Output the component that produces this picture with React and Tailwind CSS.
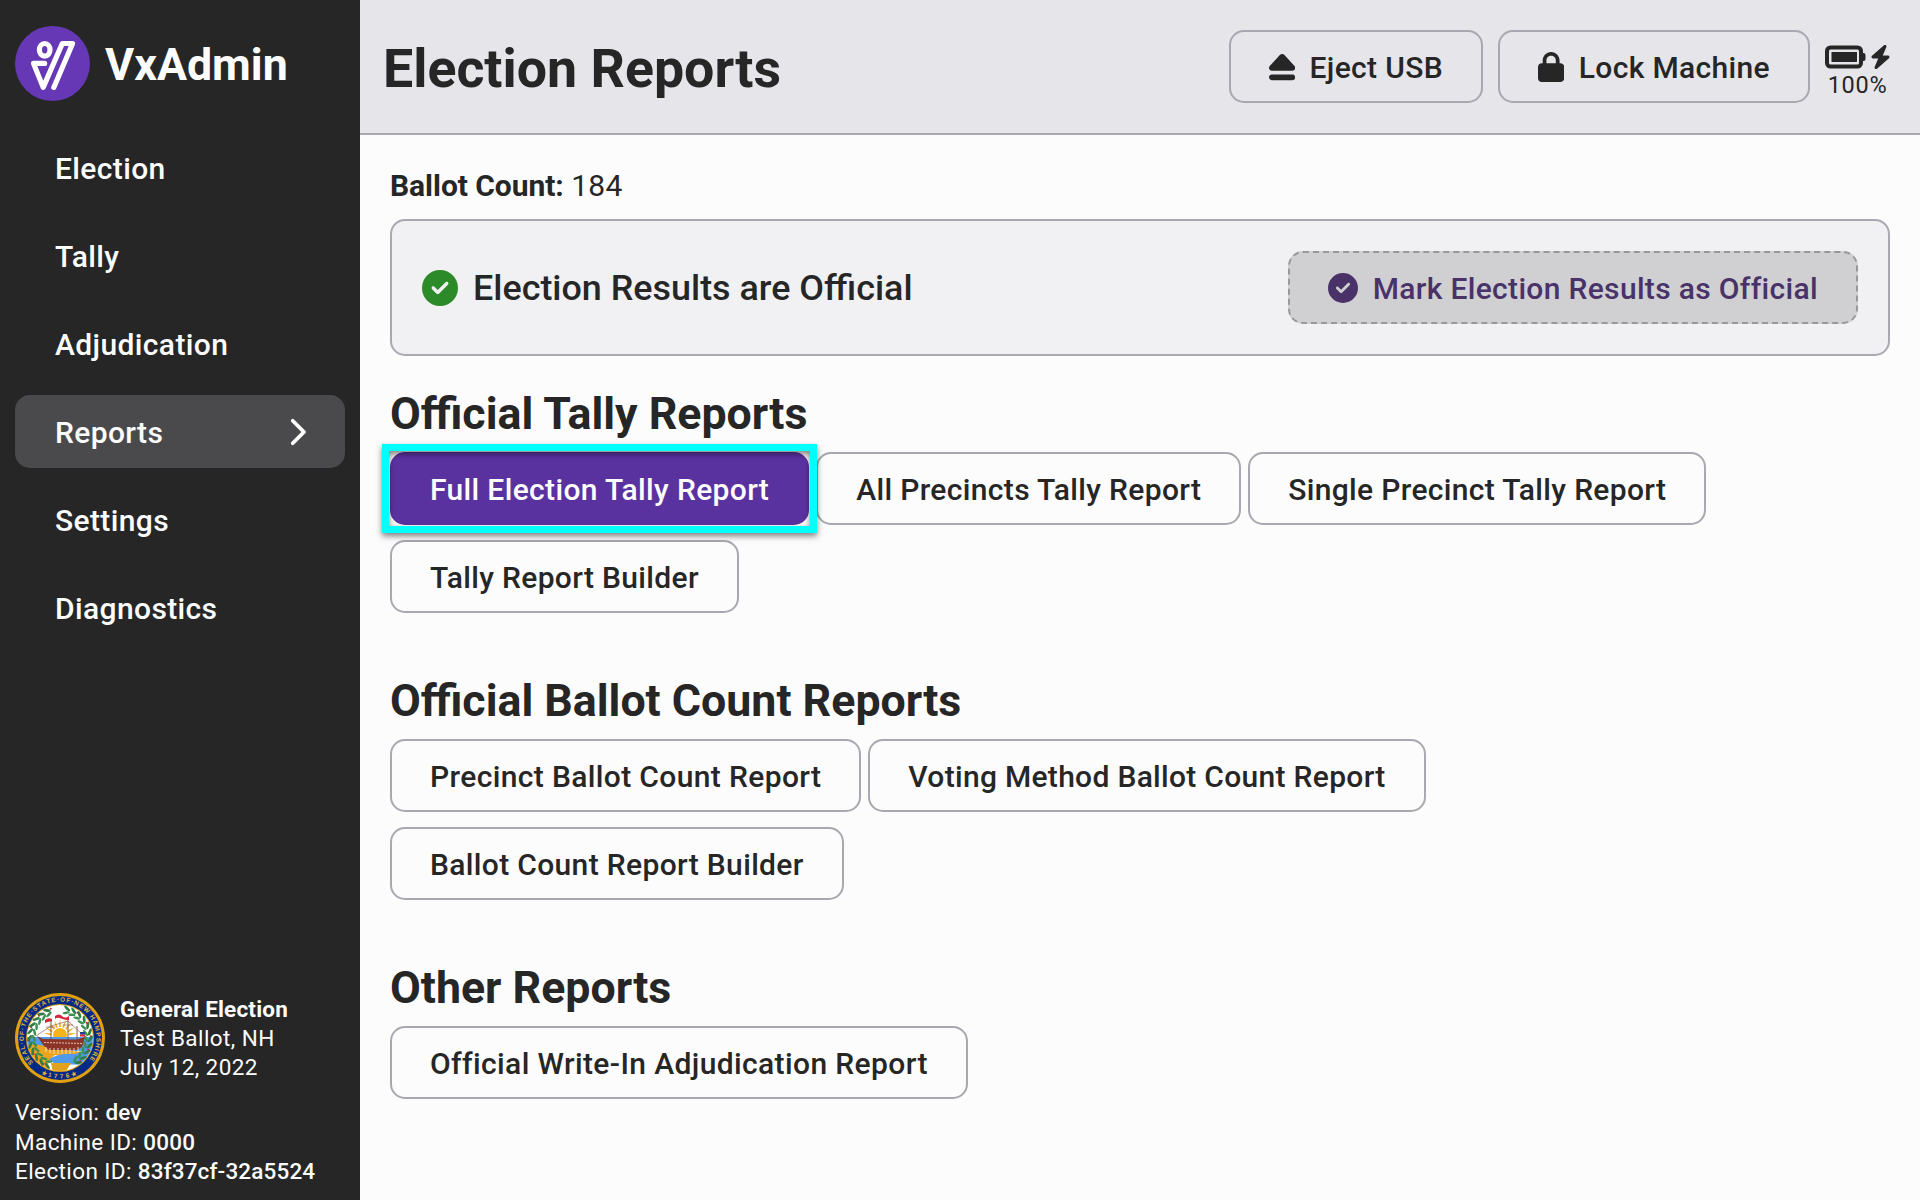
import { FaEject, FaLock, FaCircleCheck, FaChevronRight, FaBolt } from "react-icons/fa6";

const NAV_ITEMS = ["Election", "Tally", "Adjudication", "Reports", "Settings", "Diagnostics"];

function Logo() {
  return (
    <svg viewBox="0 0 75 75" className="size-[75px] shrink-0">
      <circle cx="37.5" cy="37.5" r="37.5" fill="#6638b6" />
      <g fill="none" stroke="#fff" strokeWidth="5.2" strokeLinecap="round" strokeLinejoin="round">
        <ellipse cx="29.7" cy="23.8" rx="5.3" ry="6.3" />
        <path d="M29.6 37.4H18.5L28.2 61.4L47.3 17.5H57.6L38.8 61.4" />
      </g>
    </svg>
  );
}

function Wreath() {
  const leaves = [];
  for (let a = -152; a <= 152; a += 13) {
    if (Math.abs(a) > 12) leaves.push(a);
  }
  return leaves.map((a, i) => (
    <g key={a} transform={`rotate(${a} 45 45)`}>
      <ellipse cx="43.2" cy="14.6" rx="3.8" ry="1.4" fill="#2f7d45" transform="rotate(28 43.2 14.6)" />
      <ellipse cx="43.6" cy="19" rx="3.6" ry="1.3" fill="#3c8f50" transform="rotate(-28 43.6 19)" />
      {i % 2 === 0 && <circle cx="47.4" cy="14.4" r="1" fill="#d0263a" />}
    </g>
  ));
}

function Seal() {
  const rays = [-80, -60, -40, -20, 0, 20, 40, 60, 80];
  return (
    <svg viewBox="0 0 90 90" className="size-[90px] shrink-0">
      <defs>
        <clipPath id="seal-center">
          <circle cx="45" cy="45" r="33" />
        </clipPath>
        <path id="seal-top" d="M18.2 69.6A36.4 36.4 0 1 1 71.8 69.6" />
        <path id="seal-bottom" d="M23 78.8A40.3 40.3 0 0 0 67 78.8" />
      </defs>
      <circle cx="45" cy="45" r="45" fill="#e0a010" />
      <circle cx="45" cy="45" r="42" fill="#022a86" />
      <circle cx="45" cy="45" r="34" fill="#e0a010" />
      <circle cx="45" cy="45" r="33" fill="#fff" />
      <g clipPath="url(#seal-center)">
        {rays.map((a) => (
          <path key={a} d="M43.9 34L45 26L46.1 34Z" fill="#f2b01e" transform={`rotate(${a} 45 43)`} />
        ))}
        <circle cx="45" cy="42" r="7" fill="#f6b41c" />
        <rect x="10" y="44" width="70" height="14" fill="#4f9bea" />
        <path d="M10 52Q24 50 36 55L68 59Q52 64 40 62Q30 68 34 80H10Z" fill="#eda41c" />
        <path d="M34 66Q44 60 60 61L74 56V72L40 71Z" fill="#4f9bea" />
        <path d="M36 70H56L50 80H38Z" fill="#e2a11c" />
      </g>
      <Wreath />
      <g stroke="#7d4a3c" strokeWidth="0.9" fill="none">
        <path d="M36 27V48M53 24V48M62 33V48" />
        <path d="M21 43L36 33L53 28L68 42M31 34H40M48 32H58" strokeWidth="0.6" />
      </g>
      <path d="M40 23Q44 20 47 23T54 23V27Q50 27 46 25.500T40 26Z" fill="#d4283c" />
      <path d="M30 27Q33 24 37 26V28.500Q33 28 30 30Z" fill="#d4283c" />
      <path d="M22 43L28 46L62 46.500L70 44L67 54L62 57H34L29 53Z" fill="#8c3426" />
      <path d="M29 49.5L67 50.5" stroke="#f3e6d8" strokeWidth="0.8" strokeDasharray="2 1" />
      <path d="M31 54V59M35 55V60M39 55V61M43 55V61M47 55V61M51 55V61M55 55V61M59 55V60M63 54V59" stroke="#efe7df" strokeWidth="0.9" />
      <rect x="65" y="39" width="5" height="2.5" fill="#23408f" />
      <rect x="65" y="41.5" width="5" height="2" fill="#d4283c" />
      <g fill="#e3b53a" fontFamily="'Liberation Sans', sans-serif" fontWeight="700" fontSize="6.3">
        <text>
          <textPath href="#seal-top" textLength="164">SEAL·OF·THE·STATE·OF·NEW HAMPSHIRE</textPath>
        </text>
        <text>
          <textPath href="#seal-bottom" startOffset="50%" textAnchor="middle" letterSpacing="2.6">★1776★</textPath>
        </text>
      </g>
    </svg>
  );
}

function Battery() {
  return (
    <div className="flex w-[65px] flex-col items-center pt-[11px]">
      <div className="flex items-center gap-[4px]">
        <svg viewBox="0 0 41 24" className="h-[24px] w-[41px]">
          <rect x="2" y="2.5" width="34" height="19" rx="3.5" fill="none" stroke="#262626" strokeWidth="4" />
          <rect x="6.5" y="7" width="25.5" height="10" fill="#262626" />
          <path d="M37 8h1.500a2 2 0 0 1 2 2v4a2 2 0 0 1-2 2H37z" fill="#262626" />
        </svg>
        <FaBolt className="h-[24px] w-[21px]" />
      </div>
      <span className="mt-[2px] text-[23.5px] leading-[29px] tracking-[0.7px]">100%</span>
    </div>
  );
}

function Button({
  children,
  tracking = "tracking-[0.345px]",
  className = "border-[#a8a8b0] border-solid text-[#262626]",
}) {
  return (
    <button
      type="button"
      className={`flex h-[73px] items-center gap-[14.5px] rounded-[15px] border-2 px-[38px] text-[30px] leading-none font-medium whitespace-nowrap ${tracking} ${className}`}
    >
      {children}
    </button>
  );
}

function Label({ children }) {
  return <span className="pt-[2px]">{children}</span>;
}

function Section({ title, children }) {
  return (
    <section className="mb-[61px]">
      <h2 className="mb-[11px] text-[44.7px] leading-[54px] font-bold">{title}</h2>
      <div className="flex flex-wrap gap-x-[7px] gap-y-[15px] pr-[15px]">{children}</div>
    </section>
  );
}

function Sidebar() {
  return (
    <aside className="flex w-[360px] shrink-0 flex-col bg-[#262626] px-[15px] pt-[26px] pb-[14px] text-[#fcfcfc]">
      <div className="flex h-[75px] items-center gap-[15px]">
        <Logo />
        <span className="pt-[4px] text-[44.7px] leading-none font-bold">VxAdmin</span>
      </div>
      <nav className="mt-[30px] flex flex-col gap-[15px]">
        {NAV_ITEMS.map((item) => (
          <a
            key={item}
            className={`flex h-[73px] items-center justify-between rounded-[15px] pr-[39px] pl-[40px] text-[30px] font-medium tracking-[0.375px] ${item === "Reports" ? "bg-[#4a4a4c]" : ""}`}
          >
            <span className="pt-[2px]">{item}</span>
            {item === "Reports" && <FaChevronRight className="h-[30px] w-[19px]" />}
          </a>
        ))}
      </nav>
      <div className="mt-auto flex items-center gap-[15px]">
        <Seal />
        <div className="text-[22.5px] leading-[29px] tracking-[0.42px]">
          <div className="font-bold tracking-[0.18px]">General Election</div>
          <div>Test Ballot, NH</div>
          <div>July 12, 2022</div>
        </div>
      </div>
      <div className="mt-[15px] text-[22.5px] leading-[29.25px] tracking-[0.4px]">
        <div>Version: <span className="font-medium tracking-[0.2px]">dev</span></div>
        <div>Machine ID: <span className="font-medium tracking-[0.2px]">0000</span></div>
        <div>Election ID: <span className="font-medium tracking-[0.15px]">83f37cf-32a5524</span></div>
      </div>
    </aside>
  );
}

export default function App() {
  return (
    <div className="flex h-[1200px] w-[1920px] overflow-hidden bg-[#fcfcfc] font-['Roboto',sans-serif] text-[#262626]">
      <Sidebar />
      <div className="flex min-w-0 flex-1 flex-col">
        <header className="flex h-[135px] shrink-0 items-center gap-[15px] border-b-2 border-[#a8a8b0] bg-[#e6e5ea] pr-[30px] pl-[23px]">
          <h1 className="mr-auto pt-[4px] text-[53.7px] leading-none font-bold">Election Reports</h1>
          <Button>
            <FaEject className="h-[30px] w-[26.25px]" />
            <Label>Eject USB</Label>
          </Button>
          <Button>
            <FaLock className="h-[30px] w-[26.25px]" />
            <Label>Lock Machine</Label>
          </Button>
          <Battery />
        </header>
        <main className="flex flex-col px-[30px] pt-[31px]">
          <p className="text-[30px] leading-[40px] tracking-[0.3px]">
            <span className="font-bold tracking-[-0.05px]">Ballot Count: </span>184
          </p>
          <div className="mt-[13px] mb-[31px] flex h-[137px] items-center justify-between rounded-[15px] border-2 border-[#a8a8b0] bg-[#f1f1f4] px-[30px]">
            <div className="flex items-center gap-[15px] text-[35.9px] leading-none font-medium">
              <FaCircleCheck className="size-[36px] text-[#2d8a28]" />
              <span className="pt-[3px]">Election Results are Official</span>
            </div>
            <Button tracking="tracking-[0.325px]" className="border-dashed border-[#98979b] bg-[#d0cfd2] text-[#483268]">
              <FaCircleCheck className="size-[30px]" />
              <Label>Mark Election Results as Official</Label>
            </Button>
          </div>
          <Section title="Official Tally Reports">
            <div className="relative">
              <Button className="border-[#5a32a0] bg-[#5a32a0] text-[#fcfcfc]">
                <Label>Full Election Tally Report</Label>
              </Button>
              <div className="absolute -top-[8px] -right-[8px] -bottom-[8px] -left-[8px] z-10 border-[7px] border-[#00ffff] shadow-[0_3px_6px_rgba(0,0,0,0.5),inset_0_3px_6px_rgba(0,0,0,0.5)]" />
            </div>
            <Button>
              <Label>All Precincts Tally Report</Label>
            </Button>
            <Button tracking="tracking-[0.33px]">
              <Label>Single Precinct Tally Report</Label>
            </Button>
            <Button>
              <Label>Tally Report Builder</Label>
            </Button>
          </Section>
          <Section title="Official Ballot Count Reports">
            <Button tracking="tracking-[0.365px]">
              <Label>Precinct Ballot Count Report</Label>
            </Button>
            <Button tracking="tracking-[0.3px]">
              <Label>Voting Method Ballot Count Report</Label>
            </Button>
            <Button>
              <Label>Ballot Count Report Builder</Label>
            </Button>
          </Section>
          <Section title="Other Reports">
            <Button tracking="tracking-[0.38px]">
              <Label>Official Write-In Adjudication Report</Label>
            </Button>
          </Section>
        </main>
      </div>
    </div>
  );
}
